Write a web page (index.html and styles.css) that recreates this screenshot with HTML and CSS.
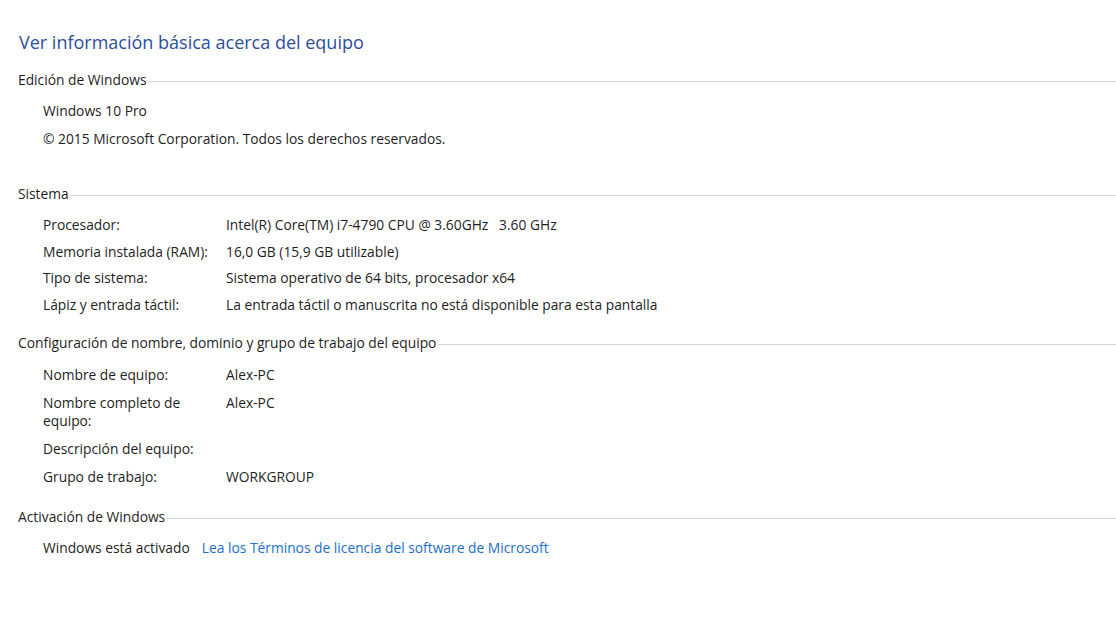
FILE: index.html
```html
<!DOCTYPE html>
<html lang="es">
<head>
<meta charset="utf-8">
<title>Sistema</title>
<link rel="stylesheet" href="styles.css">
</head>
<body>
<main class="page">
  <h1 class="title">Ver información básica acerca del equipo</h1>

  <section class="group edition">
    <h2 class="group-head"><span>Edición de Windows</span></h2>
    <div class="lines">
      <p class="line">Windows 10 Pro</p>
      <p class="line">© 2015 Microsoft Corporation. Todos los derechos reservados.</p>
    </div>
  </section>

  <section class="group sys">
    <h2 class="group-head"><span>Sistema</span></h2>
    <dl class="grid">
      <dt>Procesador:</dt><dd>Intel(R) Core(TM) i7-4790 CPU @ 3.60GHz&nbsp;&nbsp; 3.60 GHz</dd>
      <dt>Memoria instalada (RAM):</dt><dd>16,0 GB (15,9 GB utilizable)</dd>
      <dt>Tipo de sistema:</dt><dd>Sistema operativo de 64 bits, procesador x64</dd>
      <dt>Lápiz y entrada táctil:</dt><dd>La entrada táctil o manuscrita no está disponible para esta pantalla</dd>
    </dl>
  </section>

  <section class="group config">
    <h2 class="group-head"><span>Configuración de nombre, dominio y grupo de trabajo del equipo</span></h2>
    <dl class="grid">
      <dt>Nombre de equipo:</dt><dd>Alex-PC</dd>
      <dt>Nombre completo de equipo:</dt><dd>Alex-PC</dd>
      <dt>Descripción del equipo:</dt><dd></dd>
      <dt>Grupo de trabajo:</dt><dd>WORKGROUP</dd>
    </dl>
  </section>

  <section class="group">
    <h2 class="group-head"><span>Activación de Windows</span></h2>
    <div class="activation">
      <span>Windows está activado</span>
      <a class="link" href="#">Lea los Términos de licencia del software de Microsoft</a>
    </div>
  </section>
</main>
</body>
</html>
```

FILE: styles.css
```css
html, body {
  margin: 0;
  padding: 0;
  background: #ffffff;
}
body {
  font-family: "Open Sans", "Noto Sans", sans-serif;
  font-size: 13.8px;
  color: #1e1e1e;
}
.page {
  padding: 29px 0 0 18px;
}
.title {
  margin: 0 0 0 1px;
  font-size: 18px;
  font-weight: normal;
  color: #2a4f9f;
  line-height: 26px;
}
.group {
  margin-top: 21px;
}
.group.edition {
  margin-top: 15px;
}
.group.config {
  margin-top: 19px;
}
.group-head {
  display: flex;
  align-items: center;
  margin: 0;
  font-size: 13.8px;
  font-weight: normal;
  line-height: 20px;
}
.group-head::after {
  content: "";
  flex: 1;
  height: 1px;
  background: #d4d4d4;
  margin-left: 2px;
  margin-top: 2px;
}
.lines {
  padding: 12px 0 5px 25px;
}
.line {
  margin: 0 0 10px;
  line-height: 18px;
}
.grid {
  display: grid;
  grid-template-columns: 183px 1fr;
  row-gap: 10px;
  margin: 0;
  padding: 12px 0 0 25px;
  line-height: 18px;
}
.sys .grid {
  row-gap: 8.7px;
}
.config .grid {
  padding-top: 13px;
}
.grid dt, .grid dd {
  margin: 0;
}
.activation {
  display: flex;
  gap: 12px;
  padding: 12px 0 0 25px;
  line-height: 18px;
}
.link {
  color: #1a6fcf;
  text-decoration: none;
}
```
